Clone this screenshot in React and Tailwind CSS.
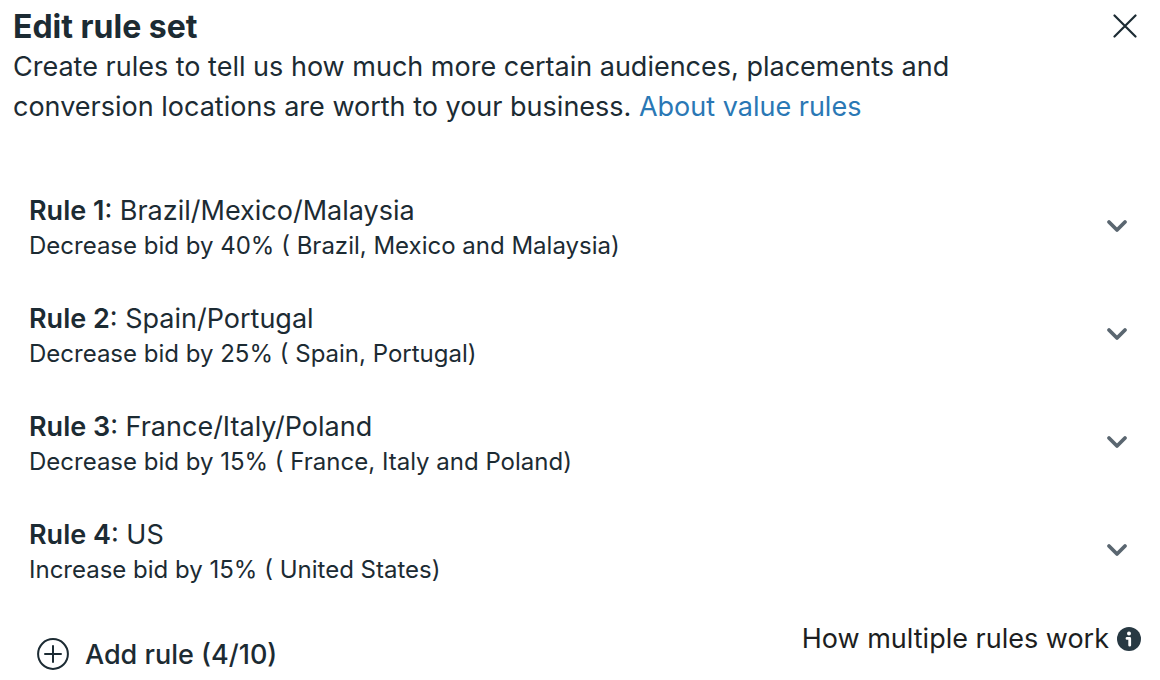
const rules = [
  { name: 'Brazil/Mexico/Malaysia', detail: 'Decrease bid by 40% ( Brazil, Mexico and Malaysia)' },
  { name: 'Spain/Portugal', detail: 'Decrease bid by 25% ( Spain, Portugal)' },
  { name: 'France/Italy/Poland', detail: 'Decrease bid by 15% ( France, Italy and Poland)' },
  { name: 'US', detail: 'Increase bid by 15% ( United States)' },
];

function CloseIcon() {
  return (
    <svg aria-hidden="true" className="size-6" viewBox="0 0 24 24" fill="none" stroke="currentColor" strokeWidth="2.2" strokeLinecap="round">
      <path d="M1.5 1.5 22.5 22.5M22.5 1.5 1.5 22.5" />
    </svg>
  );
}

function ChevronIcon() {
  return (
    <svg aria-hidden="true" className="h-4 w-6" viewBox="0 0 24 16" fill="none" stroke="currentColor" strokeWidth="3.8" strokeLinecap="round" strokeLinejoin="round">
      <path d="M4 4 12 12 20 4" />
    </svg>
  );
}

function PlusCircleIcon() {
  return (
    <svg aria-hidden="true" className="size-8" viewBox="0 0 32 32" fill="none" stroke="currentColor" strokeWidth="2" strokeLinecap="round">
      <circle cx="16" cy="16" r="14.9" />
      <path d="M16 8v16M8 16h16" />
    </svg>
  );
}

function InfoIcon() {
  return (
    <svg aria-hidden="true" className="size-6" viewBox="0 0 24 24">
      <circle cx="12" cy="12" r="12" fill="#283943" />
      <circle cx="12" cy="6.4" r="2" fill="#fff" />
      <path d="M10 11.4h2.7v6.8" fill="none" stroke="#fff" strokeWidth="2.8" strokeLinecap="round" strokeLinejoin="round" />
    </svg>
  );
}

export default function App() {
  return (
    <main className="bg-white pt-[7px] font-['Inter',sans-serif] text-[#1c2b33]">
      <header className="flex items-start justify-between pr-[23px] pl-[13px]">
        <div className="max-w-[1000px]">
          <h1 className="text-[32px] leading-10 font-bold">Edit rule set</h1>
          <p className="text-[27px] leading-10">
            Create rules to tell us how much more certain audiences, placements and conversion locations are worth to your business.{' '}
            <a href="#value-rules" className="text-[#2a78b5]">About value rules</a>
          </p>
        </div>
        <button type="button" aria-label="Close" className="mt-[7px]">
          <CloseIcon />
        </button>
      </header>

      <ul className="mt-[66px] flex flex-col gap-[38px] pr-[31px] pl-[29px]">
        {rules.map((rule, i) => (
          <li key={rule.name} className="flex items-center justify-between">
            <div>
              <h2 className="text-[27px] leading-9">
                <span className="font-semibold">Rule {i + 1}</span>: {rule.name}
              </h2>
              <p className="text-[24px] leading-[34px]">{rule.detail}</p>
            </div>
            <button type="button" aria-label={`Expand rule ${i + 1}`} className="pb-1 text-[#5a6670]">
              <ChevronIcon />
            </button>
          </li>
        ))}
      </ul>

      <footer className="mt-8 flex items-start justify-between pr-[19px] pl-[37px]">
        <button type="button" className="mt-4 flex items-start gap-4 text-[27px] leading-10 font-medium">
          <span className="pt-[3px]">
            <PlusCircleIcon />
          </span>
          Add rule (4/10)
        </button>
        <button type="button" className="flex items-center gap-2 text-[27px] leading-10 text-[#1c1e21]">
          How multiple rules work
          <InfoIcon />
        </button>
      </footer>
    </main>
  );
}
